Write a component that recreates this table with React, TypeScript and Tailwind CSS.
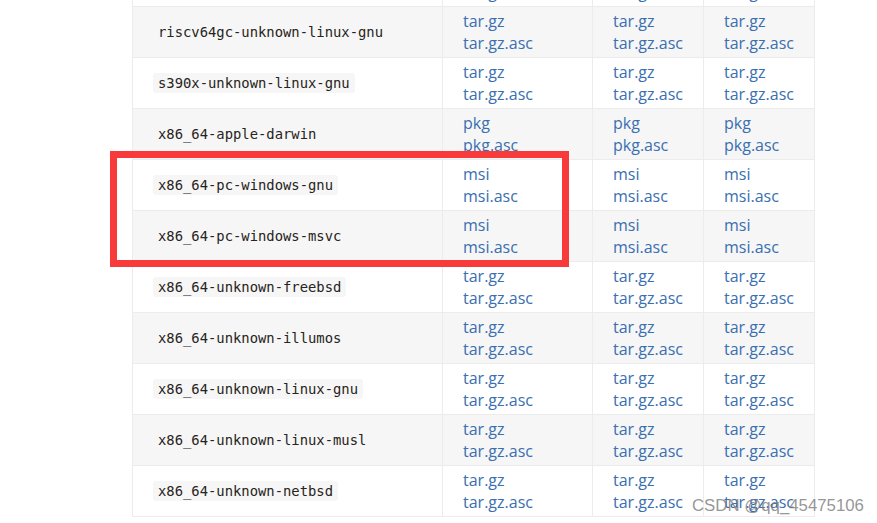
const ROWS = [
  { target: "powerpc64le-unknown-linux-gnu", ext: "tar.gz" },
  { target: "riscv64gc-unknown-linux-gnu", ext: "tar.gz" },
  { target: "s390x-unknown-linux-gnu", ext: "tar.gz" },
  { target: "x86_64-apple-darwin", ext: "pkg" },
  { target: "x86_64-pc-windows-gnu", ext: "msi" },
  { target: "x86_64-pc-windows-msvc", ext: "msi" },
  { target: "x86_64-unknown-freebsd", ext: "tar.gz" },
  { target: "x86_64-unknown-illumos", ext: "tar.gz" },
  { target: "x86_64-unknown-linux-gnu", ext: "tar.gz" },
  { target: "x86_64-unknown-linux-musl", ext: "tar.gz" },
  { target: "x86_64-unknown-netbsd", ext: "tar.gz" },
];

function LinkCell({ ext }: { ext: string }) {
  return (
    <td className="border border-[#ececec] pl-[20px] pt-[3px] pb-[3px] align-top">
      <a className="block text-[#3a6fb0] leading-[22px]">{ext}</a>
      <a className="block text-[#3a6fb0] leading-[22px]">{ext}.asc</a>
    </td>
  );
}

export default function App() {
  return (
    <div className="relative h-[523px] w-[877px] overflow-hidden bg-white">
      <table
        className="ml-[132px] -mt-[45px] w-[682px] table-fixed border-collapse text-[16px]"
        style={{ fontFamily: '"Open Sans", sans-serif' }}
      >
        <colgroup>
          <col className="w-[310px]" />
          <col className="w-[150px]" />
          <col className="w-[111px]" />
          <col className="w-[111px]" />
        </colgroup>
        <tbody>
          {ROWS.map((row, i) => (
            <tr key={row.target} className={i % 2 === 1 ? 'bg-[#f6f6f6]' : 'bg-white'}>
              <td className="border border-[#ececec] pl-[20px] pb-[2px] align-middle">
                <code
                  className="rounded-[3px] bg-[#f6f6f6] px-[5px] py-[2px] text-[13.85px] text-[#262320]"
                  style={{ fontFamily: '"DejaVu Sans Mono", monospace' }}
                >
                  {row.target}
                </code>
              </td>
              <LinkCell ext={row.ext} />
              <LinkCell ext={row.ext} />
              <LinkCell ext={row.ext} />
            </tr>
          ))}
        </tbody>
      </table>

      {/* highlight around the windows rows */}
      <div className="absolute left-[110px] top-[151px] h-[116px] w-[459px] border-[7px] border-[#f93a3a]" />

      <div
        className="absolute left-[692px] top-[493px] text-[16.8px] text-[#7a7a7a]/80"
        style={{ fontFamily: '"Liberation Sans", Arial, sans-serif' }}
      >
        CSDN @qq_45475106
      </div>
    </div>
  );
}
